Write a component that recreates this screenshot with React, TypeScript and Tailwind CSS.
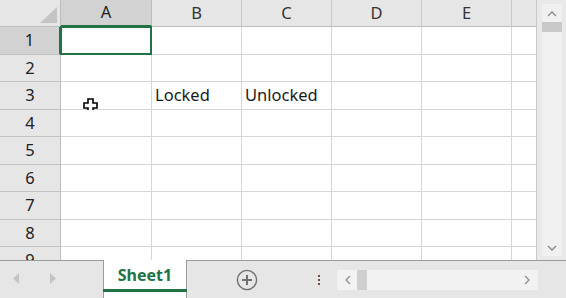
import React from 'react';

const cols = [
  { name: 'A', w: 'w-[91px]' },
  { name: 'B', w: 'w-[90px]' },
  { name: 'C', w: 'w-[90px]' },
  { name: 'D', w: 'w-[90px]' },
  { name: 'E', w: 'w-[90px]' },
  { name: '', w: 'w-[25px]' },
];

const rows = [
  { n: 1, h: 'h-[28px]' },
  { n: 2, h: 'h-[27px]' },
  { n: 3, h: 'h-[28px]' },
  { n: 4, h: 'h-[27px]' },
  { n: 5, h: 'h-[28px]' },
  { n: 6, h: 'h-[27px]' },
  { n: 7, h: 'h-[28px]' },
  { n: 8, h: 'h-[27px]' },
  { n: 9, h: 'h-[28px]' },
];

const cellText: Record<string, string> = { '3B': 'Locked', '3C': 'Unlocked' };

const CrossCursor = () => (
  <svg width="15" height="15" viewBox="0 0 15 15" className="absolute left-[22px] top-[16px]">
    <path d="M5 1h5v4h4v5h-4v4H5v-4H1V5h4z" fill="#fff" stroke="#000" strokeWidth="1.6" />
  </svg>
);

const App: React.FC = () => {
  return (
    <div className="w-[566px] h-[298px] overflow-hidden bg-white flex flex-col font-['Noto_Sans','Open_Sans',sans-serif] text-[#222]">
      <div className="flex h-[260px] overflow-hidden">
        <div className="w-[537px] flex flex-col overflow-hidden border-r border-[#c8c8c8]">
          {/* column headers */}
          <div className="flex h-[27px] shrink-0">
            <div className="w-[61px] shrink-0 bg-[#e6e6e6] border-r border-b border-[#bdbdbd] relative">
              <svg width="61" height="27" className="absolute inset-0">
                <polygon points="40,23 57,23 57,7" fill="#c4c4c4" />
              </svg>
            </div>
            {cols.map((c) => (
              <div
                key={c.name + c.w}
                className={`${c.w} shrink-0 flex items-center justify-center text-[16.5px] border-r ${
                  c.name === 'A'
                    ? 'bg-[#d2d2d2] border-[#bdbdbd] border-b-2 border-b-[#217346] text-[#222]'
                    : 'bg-[#e6e6e6] border-[#c8c8c8] border-b border-b-[#bdbdbd] text-[#333]'
                }`}
              >
                {c.name}
              </div>
            ))}
          </div>
          {rows.map((r) => (
            <div key={r.n} className={`flex ${r.h} shrink-0`}>
              <div
                className={`w-[61px] shrink-0 flex items-center justify-center text-[16.5px] border-r border-b border-b-[#c2c2c2] ${
                  r.n === 1 ? 'bg-[#d2d2d2] border-r-[#217346] border-r-2' : 'bg-[#e6e6e6] border-r-[#bdbdbd]'
                }`}
              >
                {r.n}
              </div>
              {cols.map((c) => {
                const key = `${r.n}${c.name}`;
                return (
                  <div key={key + c.w} className={`${c.w} shrink-0 relative border-r border-b border-[#d6d6d6] bg-white`}>
                    {cellText[key] && (
                      <span className="absolute left-[3px] top-[2px] text-[16.5px] leading-[22px] text-[#1a1a1a]">{cellText[key]}</span>
                    )}
                    {key === '1A' && (
                      <div className="absolute -left-[1px] -top-[1px] w-[92px] h-[29px] border-2 border-[#217346]" />
                    )}
                    {key === '3A' && <CrossCursor />}
                  </div>
                );
              })}
            </div>
          ))}
        </div>
        {/* vertical scrollbar */}
        <div className="w-[29px] bg-[#e9e9e9] flex flex-col items-center pt-[4px] pb-[4px]">
          <div className="w-[20px] flex-1 bg-[#f0f0f0] flex flex-col items-center">
            <svg width="12" height="18" viewBox="0 0 12 18">
              <path d="M2 12 L6 8 L10 12" fill="none" stroke="#8a8a8a" strokeWidth="1.3" />
            </svg>
            <div className="w-[20px] h-[10px] bg-[#c9c9c9]" />
            <div className="flex-1" />
            <svg width="12" height="16" viewBox="0 0 12 16">
              <path d="M2 6 L6 10 L10 6" fill="none" stroke="#8a8a8a" strokeWidth="1.3" />
            </svg>
          </div>
        </div>
      </div>
      {/* sheet tab bar */}
      <div className="h-[38px] flex bg-[#e6e6e6]">
        <div className="w-[103px] h-full border-t border-[#9c9c9c] flex items-center">
          <svg width="103" height="36" viewBox="0 0 103 36">
            <polygon points="19,11 19,22 13,16.5" fill="#c4c4c4" />
            <polygon points="50,11 50,22 56,16.5" fill="#c4c4c4" />
          </svg>
        </div>
        <div className="w-[84px] h-full bg-white border-x border-[#9c9c9c] flex flex-col">
          <div className="flex-1 flex items-center justify-center text-[16px] font-bold text-[#217346] pt-[1px]">Sheet1</div>
          <div className="h-[3px] bg-[#217346] mb-[6px] -mx-[1px]" />
        </div>
        <div className="flex-1 h-full border-t border-[#9c9c9c] flex items-center">
          <div className="w-[120px] flex justify-center">
            <svg width="22" height="22" viewBox="0 0 22 22">
              <circle cx="11" cy="11" r="9.6" fill="none" stroke="#707070" strokeWidth="1.4" />
              <path d="M11 6v10M6 11h10" stroke="#707070" strokeWidth="2" />
            </svg>
          </div>
          <div className="w-[24px] flex flex-col items-center gap-[2px]">
            <div className="w-[2px] h-[2px] bg-[#7a4a35]" />
            <div className="w-[2px] h-[2px] bg-[#7a4a35]" />
            <div className="w-[2px] h-[2px] bg-[#7a4a35]" />
          </div>
          <div className="ml-[6px] w-[201px] h-[20px] bg-[#f2f2f2] flex items-center">
            <svg width="20" height="20" viewBox="0 0 20 20">
              <path d="M13 6 L9 10 L13 14" fill="none" stroke="#8a8a8a" strokeWidth="1.2" />
            </svg>
            <div className="w-[10px] h-[20px] bg-[#cfcfcf]" />
            <div className="flex-1" />
            <svg width="20" height="20" viewBox="0 0 20 20">
              <path d="M7 6 L11 10 L7 14" fill="none" stroke="#8a8a8a" strokeWidth="1.2" />
            </svg>
          </div>
        </div>
      </div>
    </div>
  );
};

export default App;
